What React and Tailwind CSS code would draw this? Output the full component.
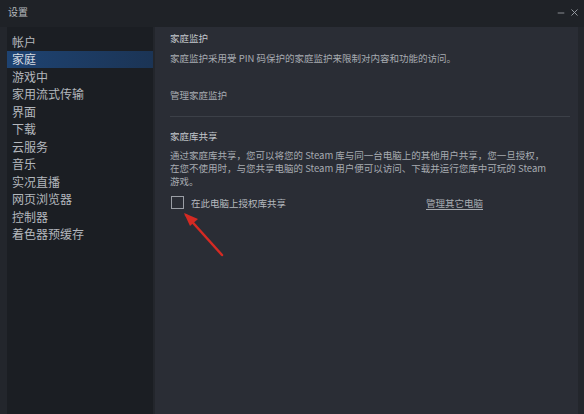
import { X, Minus } from 'lucide-react';

const menu = ['帐户', '家庭', '游戏中', '家用流式传输', '界面', '下载', '云服务', '音乐', '实况直播', '网页浏览器', '控制器', '着色器预缓存'];

export default function App() {
    return (
        <div
            className="relative w-[584px] h-[414px] overflow-hidden bg-[#23262c] flex flex-col"
            style={{ fontFamily: '"Noto Sans CJK SC", "Noto Sans", sans-serif' }}
        >
            <div className="h-[27px] flex items-start justify-between pl-[8px] pr-[4px] pt-[5px] bg-[#1f2227]">
                <span className="text-[10px] leading-[14px] text-[#b4b8bd]">设置</span>
                <div className="flex items-center gap-[3px] text-[#9ea2a8] pt-[2px]">
                    <Minus size={10} strokeWidth={2} />
                    <X size={11} strokeWidth={2} />
                </div>
            </div>

            <div className="flex flex-1 min-h-0 pl-[7px] pr-[6px]">
                <nav className="w-[146px] bg-[#1b1e23] pt-[6px]">
                    {menu.map((item) => (
                        <div
                            key={item}
                            className={`h-[17.5px] pl-[5px] flex items-center text-[12px] leading-none ${item === '家庭'
                                ? 'bg-gradient-to-r from-[#1e4372] to-[#1b3455] text-[#d6dbe2]'
                                : 'text-[#b3b7bd]'
                                }`}
                        >
                            {item}
                        </div>
                    ))}
                </nav>

                <main className="flex-1 bg-[#2a2d35] ml-[2px] pl-[15px] pr-[8px] pt-[3px] text-[9.5px] leading-[12px]">
                    <h3 className="text-[#c3c7cc] mt-[2px]">家庭监护</h3>
                    <p className="text-[#a7abb1] mt-[8px]">家庭监护采用受 PIN 码保护的家庭监护来限制对内容和功能的访问。</p>
                    <p className="text-[#a7abb1] mt-[25px]">管理家庭监护</p>

                    <div className="h-px bg-[#3c4048] mt-[15px]" />

                    <h3 className="text-[#c3c7cc] mt-[13px]">家庭库共享</h3>
                    <p className="text-[#a7abb1] mt-[7px] leading-[13px]">
                        通过家庭库共享，您可以将您的 Steam 库与同一台电脑上的其他用户共享，您一旦授权，<br />
                        在您不使用时，与您共享电脑的 Steam 用户便可以访问、下载并运行您库中可玩的 Steam<br />
                        游戏。
                    </p>

                    <div className="flex items-center mt-[8px]">
                        <div className="w-[13px] h-[13px] border border-[#9a9ea5] ml-[1px]" />
                        <span className="ml-[7px] text-[#b4b8be]">在此电脑上授权库共享</span>
                        <span className="ml-[140px] text-[#a7abb1] underline underline-offset-2">管理其它电脑</span>
                    </div>
                </main>
            </div>

            <svg className="absolute left-[180px] top-[210px]" width="50" height="52" viewBox="0 0 50 52">
                <path d="M6 5 L42 45" stroke="#d42a23" strokeWidth="2.5" strokeLinecap="round" />
                <path d="M4 3 L18 9 L10 16 Z" fill="#d42a23" />
            </svg>
        </div>
    );
}
